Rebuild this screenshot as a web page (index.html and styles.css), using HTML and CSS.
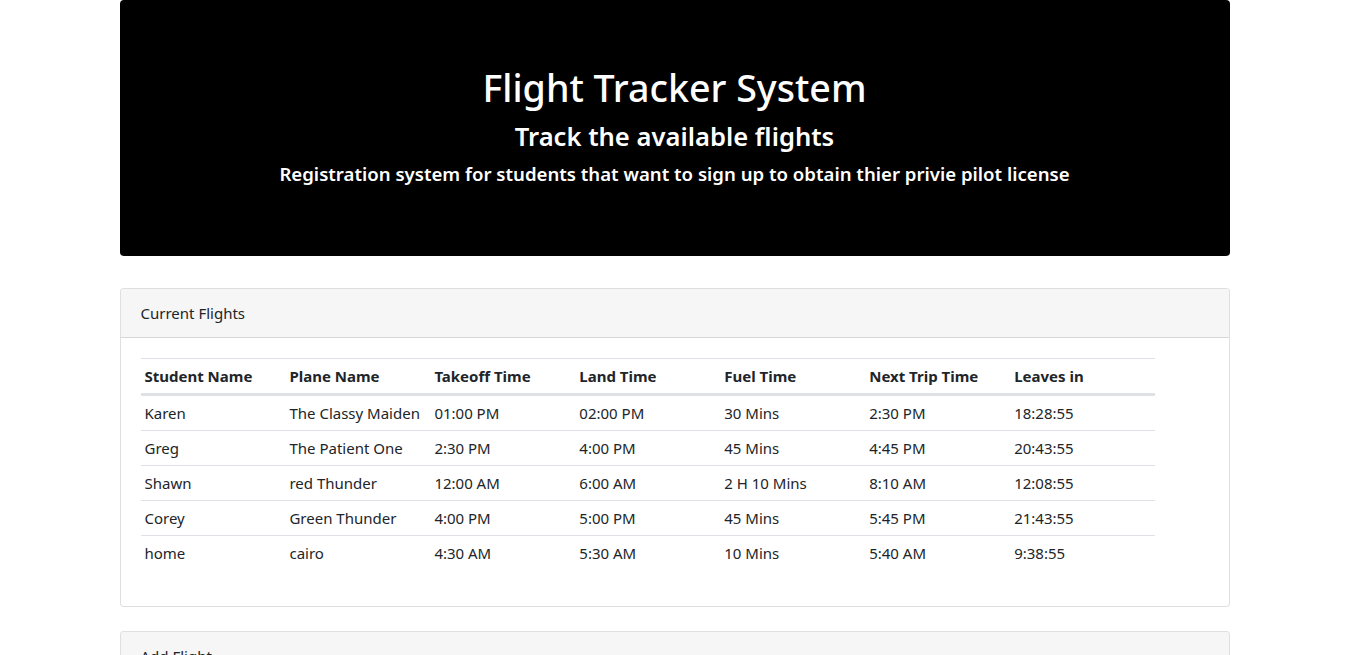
FILE: index.html
```html
<!DOCTYPE html>
<html lang="en">
<head>
<meta charset="utf-8">
<title>Flight Tracker System</title>
<link rel="stylesheet" href="styles.css">
</head>
<body>
<div class="container">
  <header class="jumbotron">
    <h1 class="title">Flight Tracker System</h1>
    <h2 class="subtitle">Track the available flights</h2>
    <h5 class="lead">Registration system for students that want to sign up to obtain thier privie pilot license</h5>
  </header>

  <section class="card">
    <div class="card-header">Current Flights</div>
    <div class="card-body">
      <table class="table">
        <thead>
          <tr>
            <th>Student Name</th>
            <th>Plane Name</th>
            <th>Takeoff Time</th>
            <th>Land Time</th>
            <th>Fuel Time</th>
            <th>Next Trip Time</th>
            <th>Leaves in</th>
          </tr>
        </thead>
        <tbody>
          <tr><td>Karen</td><td>The Classy Maiden</td><td>01:00 PM</td><td>02:00 PM</td><td>30 Mins</td><td>2:30 PM</td><td>18:28:55</td></tr>
          <tr><td>Greg</td><td>The Patient One</td><td>2:30 PM</td><td>4:00 PM</td><td>45 Mins</td><td>4:45 PM</td><td>20:43:55</td></tr>
          <tr><td>Shawn</td><td>red Thunder</td><td>12:00 AM</td><td>6:00 AM</td><td>2 H 10 Mins</td><td>8:10 AM</td><td>12:08:55</td></tr>
          <tr><td>Corey</td><td>Green Thunder</td><td>4:00 PM</td><td>5:00 PM</td><td>45 Mins</td><td>5:45 PM</td><td>21:43:55</td></tr>
          <tr><td>home</td><td>cairo</td><td>4:30 AM</td><td>5:30 AM</td><td>10 Mins</td><td>5:40 AM</td><td>9:38:55</td></tr>
        </tbody>
      </table>
    </div>
  </section>

  <section class="card">
    <div class="card-header">Add Flight</div>
    <div class="card-body">
      <p class="note">Fill in the form to add a flight.</p>
    </div>
  </section>
</div>
</body>
</html>
```

FILE: styles.css
```css
* { box-sizing: border-box; }

body {
  margin: 0;
  font-family: "Noto Sans", "Open Sans", sans-serif;
  font-size: 16px;
  line-height: 1.5;
  color: #212529;
  background: #fff;
}

.container {
  width: 1110px;
  margin: 0 auto;
}

.jumbotron {
  background: #000;
  color: #fff;
  border-radius: 4px;
  padding: 64px 32px 62px;
  margin-bottom: 32px;
  text-align: center;
}

.title {
  margin: 0 0 8px;
  font-size: 37.6px;
  font-weight: 500;
  line-height: 48px;
}

.subtitle {
  margin: 0 0 8px;
  font-size: 25.6px;
  font-weight: 600;
  line-height: 34px;
}

.lead {
  margin: 0 0 8px;
  font-size: 18.6px;
  font-weight: 600;
  line-height: 24px;
}

.card {
  border: 1px solid rgba(0, 0, 0, 0.125);
  border-radius: 4px;
  margin-bottom: 24px;
  background: #fff;
}

.card-header {
  padding: 12px 20px;
  background: #f6f6f6;
  border-bottom: 1px solid rgba(0, 0, 0, 0.125);
  border-radius: 3px 3px 0 0;
  font-size: 15px;
  line-height: 24px;
}

.card-body {
  padding: 20px;
}

.table {
  width: 95%;
  table-layout: fixed;
  border-collapse: collapse;
  margin-bottom: 16px;
  font-size: 15px;
}

.table th,
.table td {
  padding: 5px 4px;
  border-top: 1px solid #dee2e6;
  text-align: left;
  vertical-align: top;
  line-height: 24px;
  white-space: nowrap;
}

.table th {
  font-weight: 700;
}

.table thead th {
  border-bottom: 3px solid #dee2e6;
}

.note {
  margin: 0;
}
```
